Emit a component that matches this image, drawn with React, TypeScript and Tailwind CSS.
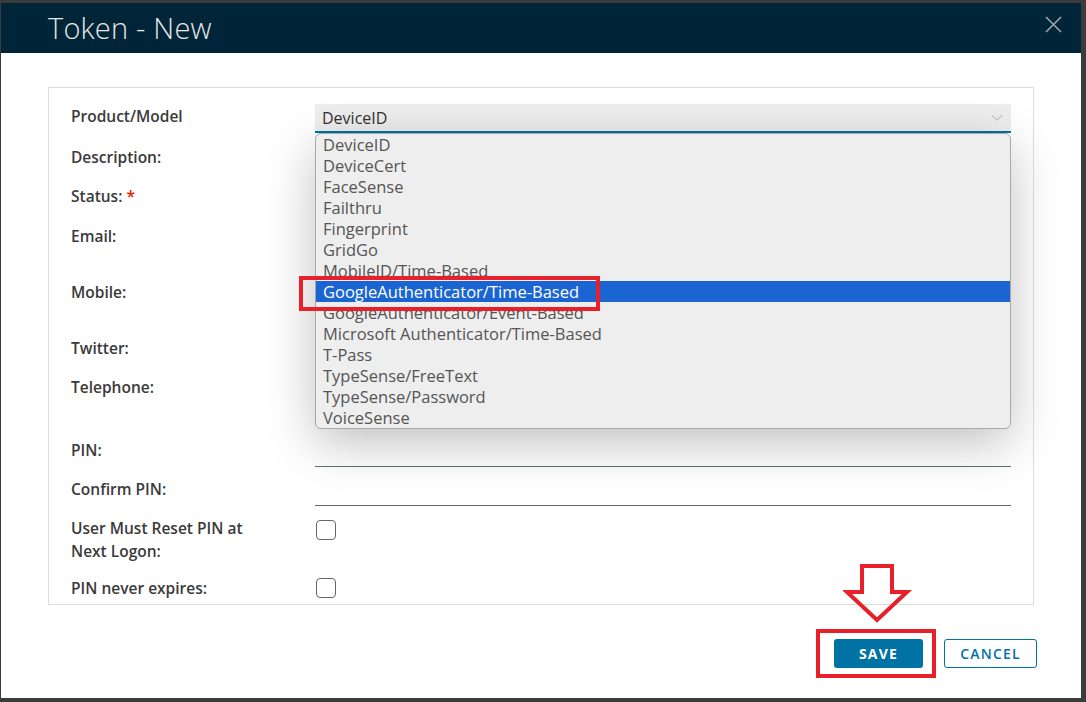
import React from 'react';

const options = [
  'DeviceID',
  'DeviceCert',
  'FaceSense',
  'Failthru',
  'Fingerprint',
  'GridGo',
  'MobileID/Time-Based',
  'GoogleAuthenticator/Time-Based',
  'GoogleAuthenticator/Event-Based',
  'Microsoft Authenticator/Time-Based',
  'T-Pass',
  'TypeSense/FreeText',
  'TypeSense/Password',
  'VoiceSense',
];

type Row = { label: React.ReactNode; h: string; field: 'select' | 'input' | 'check'; two?: boolean };

const rows: Row[] = [
  { label: 'Product/Model', h: 'h-[41px]', field: 'select' },
  { label: 'Description:', h: 'h-[39px]', field: 'input' },
  { label: <>Status: <span className="text-[#e12200]">*</span></>, h: 'h-[40px]', field: 'input' },
  { label: 'Email:', h: 'h-[56px]', field: 'input' },
  { label: 'Mobile:', h: 'h-[56px]', field: 'input' },
  { label: 'Twitter:', h: 'h-[39px]', field: 'input' },
  { label: 'Telephone:', h: 'h-[63px]', field: 'input' },
  { label: 'PIN:', h: 'h-[39px]', field: 'input' },
  { label: 'Confirm PIN:', h: 'h-[39px]', field: 'input' },
  { label: 'User Must Reset PIN at Next Logon:', h: 'h-[60px]', field: 'check', two: true },
  { label: 'PIN never expires:', h: 'h-[27px]', field: 'check' },
];

function Field({ row }: { row: Row }) {
  if (row.field === 'select') {
    return (
      <div className="-mt-[1px] flex h-[29px] w-full items-center justify-between border-b-2 border-[#0072a3] bg-[#eeeeee] pl-[7px] pr-[8px] text-[16px] text-[#333]">
        <span>DeviceID</span>
        <svg width="12" height="8" viewBox="0 0 12 8" fill="none" stroke="#c8c8c8" strokeWidth="1.2">
          <path d="M1 1.5 L6 6 L11 1.5" />
        </svg>
      </div>
    );
  }
  if (row.field === 'input') {
    return <div className="h-[28px] w-full border-b border-[#5f6e72]" />;
  }
  return <div className={`${row.two ? 'mt-[3px]' : 'mt-[1px]'} ml-[1px] h-[20px] w-[20px] rounded-[4px] border border-[#666]`} />;
}

export default function App() {
  return (
    <div className="h-[702px] w-[1086px] overflow-hidden bg-[#3b3b3b] pl-[1px] pt-[3px]" style={{ fontFamily: '"Open Sans", "Noto Sans", sans-serif' }}>
      <div className="relative h-[695px] w-[1080px] bg-white">
        {/* header */}
        <div className="flex h-[50px] items-center justify-between bg-[#002538] pl-[47px] pr-[19px]">
          <h1 className="text-[29px] font-light tracking-[0.2px] text-[#e6e6e6]">Token - New</h1>
          <svg width="17" height="17" viewBox="0 0 17 17" className="-mt-[8px]" stroke="#9aa4aa" strokeWidth="1.6">
            <path d="M1 1 L16 16 M16 1 L1 16" />
          </svg>
        </div>

        {/* form card */}
        <div className="relative ml-[47px] mt-[34px] w-[986px] border border-[#dddddd] pl-[22px] pr-[22px] pt-[17px]">
          {rows.map((row, i) => (
            <div key={i} className={`flex items-start ${row.h}`}>
              <div className="w-[244px] shrink-0 pr-[44px]">
                <div
                  className={`text-[15.5px] font-semibold text-[#3a3a3a] ${row.two ? 'leading-[23px]' : 'leading-[22px]'}`}
                >
                  {row.label}
                </div>
              </div>
              <div className="flex-1">
                <Field row={row} />
              </div>
            </div>
          ))}

          {/* open dropdown list */}
          <div className="absolute left-[266px] top-[45px] w-[696px] overflow-hidden rounded-[6px] border border-[#a8a8a8] bg-[#eeeeee] shadow-[0_14px_50px_rgba(0,0,0,0.25)]">
            {options.map((o, i) => (
              <div
                key={o}
                className={`h-[21px] pl-[7px] text-[16.5px] leading-[21px] ${i === 7 ? 'bg-[#1b65d3] text-white' : 'text-[#555]'}`}
              >
                {o}
              </div>
            ))}
          </div>
        </div>

        {/* footer */}
        <div className="mt-[34px] flex justify-end gap-[21px] pr-[44px]">
          <button className="h-[29px] w-[89px] rounded-[3px] bg-[#0072a3] text-[14px] font-bold tracking-[1.2px] text-white">
            SAVE
          </button>
          <button className="h-[29px] w-[93px] rounded-[3px] border border-[#0072a3] bg-white text-[14px] font-semibold tracking-[1.2px] text-[#0072a3]">
            CANCEL
          </button>
        </div>

        {/* annotations */}
        <div className="absolute left-[298px] top-[273px] h-[35px] w-[301px] border-[4px] border-[#e8202a]" />
        <div className="absolute left-[815px] top-[626px] h-[49px] w-[120px] border-[4px] border-[#e8202a]" />
        <svg className="absolute left-[842px] top-[560px]" width="70" height="62" viewBox="0 0 70 62" fill="none" stroke="#e8202a" strokeWidth="4" strokeLinejoin="miter">
          <path d="M19 3 H49 V29 H64 L34 57 L4 29 H19 Z" />
        </svg>
      </div>
    </div>
  );
}
